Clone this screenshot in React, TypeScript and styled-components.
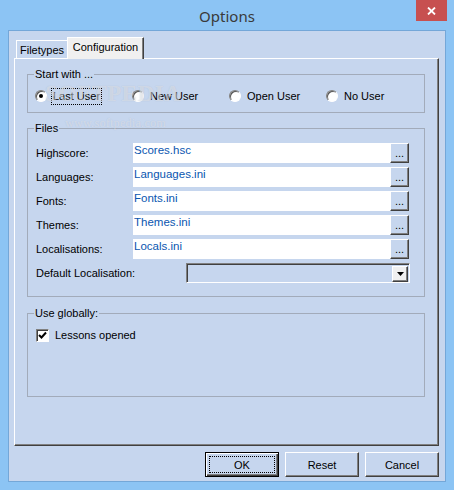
import styled, { createGlobalStyle, css } from 'styled-components'

const GlobalStyle = createGlobalStyle`
  html, body {
    margin: 0;
    padding: 0;
    background: #8cc4f4;
  }
  * {
    box-sizing: border-box;
  }
`

const FONT = `"Liberation Sans", Arial, sans-serif`
const FACE = '#c6d6ee'

const Window = styled.div`
  position: relative;
  width: 454px;
  height: 490px;
  background: #8cc4f4;
  display: flex;
  flex-direction: column;
  font-family: ${FONT};
  font-size: 11px;
  color: #000;
`

const TitleBar = styled.div`
  height: 30px;
  flex-shrink: 0;
  display: grid;
  grid-template-columns: 1fr auto 1fr;
  align-items: center;
`

const Title = styled.div`
  grid-column: 2;
  font-family: "Noto Sans", "Open Sans", sans-serif;
  font-size: 15px;
  color: #3a3a3a;
  padding-top: 1px;
`

const CloseButton = styled.div`
  grid-column: 3;
  justify-self: end;
  align-self: start;
  width: 31px;
  height: 21px;
  margin-right: 7px;
  background: #c75050;
  display: flex;
  align-items: center;
  justify-content: center;
`

const Client = styled.div`
  flex: 1;
  margin: 0 8px 8px;
  background: ${FACE};
  border: 1px solid #74a7d8;
  padding: 6px 6px 4px 5px;
  display: flex;
  flex-direction: column;
`

const TabStrip = styled.div`
  height: 21px;
  flex-shrink: 0;
  display: flex;
  align-items: flex-end;
  padding-left: 2px;
`

const Tab = styled.div<{ $active?: boolean }>`
  width: 51px;
  height: 18px;
  display: flex;
  align-items: center;
  justify-content: center;
  padding-top: 1px;
  background: ${FACE};
  border-top: 1px solid #fff;
  border-left: 1px solid #fff;
  ${p =>
    p.$active &&
    css`
      position: relative;
      z-index: 1;
      width: 77px;
      height: 22px;
      margin-bottom: -1px;
      padding: 0 0 3px;
      background: #f0f0f0;
      border-right: 1px solid #404040;
      box-shadow: inset -1px 0 #808080;
    `}
`

const TabPanel = styled.div`
  flex: 1;
  background: ${FACE};
  border: 1px solid;
  border-color: #fff #404040 #404040 #fff;
  box-shadow: inset -1px -1px #808080;
  padding: 8px 13px 0 12px;
`

const Group = styled.fieldset<{ $gap?: number }>`
  margin: ${p => p.$gap ?? 0}px 0 0;
  padding: 0;
  border: 1px solid #a2abba;
  min-width: 0;
`

const Legend = styled.legend`
  margin-left: 6px;
  padding: 0 1px;
  line-height: 14px;
`

const RadioRow = styled.div`
  display: flex;
  height: 16px;
  align-items: center;
  margin: 7px 0 8px 7px;
`

const RadioItem = styled.label`
  width: 97px;
  display: flex;
  align-items: center;
`

const RadioCircle = styled.span<{ $checked?: boolean }>`
  width: 12px;
  height: 12px;
  border-radius: 50%;
  background: #fff;
  border: 1px solid;
  border-color: #808080 #fff #fff #808080;
  box-shadow: inset 1px 1px #555;
  display: flex;
  align-items: center;
  justify-content: center;
  flex-shrink: 0;
  &::after {
    content: '';
    width: 4px;
    height: 4px;
    border-radius: 50%;
    background: ${p => (p.$checked ? '#000' : 'transparent')};
  }
`

const RadioText = styled.span<{ $focused?: boolean }>`
  margin-left: 4px;
  padding: 1px 1px;
  line-height: 13px;
  border: 1px dotted ${p => (p.$focused ? '#000' : 'transparent')};
`

const FileGrid = styled.div`
  display: grid;
  grid-template-columns: 97px 257px 19px;
  grid-auto-rows: 20px;
  row-gap: 4px;
  align-items: center;
  margin: 8px 0 0 8px;
`

const FieldLabel = styled.span`
  line-height: 13px;
  padding-top: 1px;
`

const TextField = styled.div`
  height: 20px;
  background: #fff;
  color: #0a56b0;
  padding: 1px 0 0 1px;
  line-height: 13px;
  font-size: 11.5px;
`

const RaisedButton = styled.div`
  height: 20px;
  background: ${FACE};
  border: 1px solid;
  border-color: #fff #404040 #404040 #fff;
  box-shadow: inset -1px -1px #808080;
  display: flex;
  align-items: center;
  justify-content: center;
  padding-bottom: 1px;
`

const ComboRow = styled.div`
  display: flex;
  align-items: center;
  margin: 4px 0 13px 8px;
`

const ComboLabel = styled.span`
  width: 150px;
  line-height: 13px;
`

const Combo = styled.div`
  width: 224px;
  height: 20px;
  background: ${FACE};
  border: 1px solid;
  border-color: #808080 #fff #fff #808080;
  box-shadow: inset 1px 1px #404040;
  display: flex;
  justify-content: flex-end;
  padding: 2px 1px 1px 2px;
`

const ComboArrow = styled.div`
  width: 16px;
  height: 16px;
  background: #f0f0f0;
  border: 1px solid;
  border-color: #fff #404040 #404040 #fff;
  box-shadow: inset -1px -1px #808080;
  display: flex;
  align-items: center;
  justify-content: center;
`

const CheckRow = styled.label`
  display: flex;
  align-items: center;
  margin: 9px 0 54px 8px;
`

const CheckBox = styled.span`
  width: 13px;
  height: 13px;
  background: #fff;
  border: 1px solid;
  border-color: #808080 #fff #fff #808080;
  box-shadow: inset 1px 1px #404040;
  display: flex;
  align-items: center;
  justify-content: center;
`

const CheckText = styled.span`
  margin-left: 6px;
  line-height: 13px;
`

const ButtonBar = styled.div`
  display: flex;
  justify-content: flex-end;
  gap: 6px;
  margin-top: 6px;
`

const DialogButton = styled.div<{ $default?: boolean }>`
  width: 74px;
  height: 25px;
  background: ${FACE};
  border: 1px solid;
  border-color: #fff #404040 #404040 #fff;
  box-shadow: inset -1px -1px #808080;
  display: flex;
  align-items: center;
  justify-content: center;
  ${p =>
    p.$default &&
    css`
      border-color: #000;
      box-shadow: inset 1px 1px #fff, inset -1px -1px #404040, inset -2px -2px #808080;
      padding: 3px;
    `}
`

const FocusRect = styled.span`
  flex: 1;
  align-self: stretch;
  border: 1px dotted #000;
  display: flex;
  align-items: center;
  justify-content: center;
`

const Watermark = styled.div`
  position: absolute;
  left: 45px;
  top: 81px;
  pointer-events: none;
  color: rgba(255, 255, 255, 0.4);
  font-family: "Liberation Serif", serif;
  display: flex;
  flex-direction: column;
`

const WatermarkBrand = styled.span`
  font-size: 23px;
  font-weight: bold;
  letter-spacing: 0.5px;
  text-shadow: 0 0 1px rgba(120, 130, 150, 0.3);
`

const WatermarkUrl = styled.span`
  margin: 9px 0 0 20px;
  font-size: 12px;
  letter-spacing: 0.3px;
  text-shadow: 0 0 1px rgba(120, 130, 150, 0.3);
`

const radios = [
  { label: 'Last User', checked: true },
  { label: 'New User' },
  { label: 'Open User' },
  { label: 'No User' },
]

const files = [
  ['Highscore:', 'Scores.hsc'],
  ['Languages:', 'Languages.ini'],
  ['Fonts:', 'Fonts.ini'],
  ['Themes:', 'Themes.ini'],
  ['Localisations:', 'Locals.ini'],
]

export default function App() {
  return (
    <>
      <GlobalStyle />
      <Window>
        <TitleBar>
          <Title>Options</Title>
          <CloseButton>
            <svg width="9" height="8" viewBox="0 0 9 8">
              <path d="M1 0.5 L8 7.5 M8 0.5 L1 7.5" stroke="#fff" strokeWidth="1.8" />
            </svg>
          </CloseButton>
        </TitleBar>

        <Client>
          <TabStrip>
            <Tab>Filetypes</Tab>
            <Tab $active>Configuration</Tab>
          </TabStrip>

          <TabPanel>
            <Group>
              <Legend>Start with ...</Legend>
              <RadioRow>
                {radios.map(r => (
                  <RadioItem key={r.label}>
                    <RadioCircle $checked={r.checked} />
                    <RadioText $focused={r.checked}>{r.label}</RadioText>
                  </RadioItem>
                ))}
              </RadioRow>
            </Group>

            <Group $gap={8}>
              <Legend>Files</Legend>
              <FileGrid>
                {files.map(([label, value]) => [
                  <FieldLabel key={label}>{label}</FieldLabel>,
                  <TextField key={label + 'v'}>{value}</TextField>,
                  <RaisedButton key={label + 'b'}>...</RaisedButton>,
                ])}
              </FileGrid>
              <ComboRow>
                <ComboLabel>Default Localisation:</ComboLabel>
                <Combo>
                  <ComboArrow>
                    <svg width="7" height="4" viewBox="0 0 7 4">
                      <path d="M0 0 H7 L3.5 4 Z" fill="#000" />
                    </svg>
                  </ComboArrow>
                </Combo>
              </ComboRow>
            </Group>

            <Group $gap={9}>
              <Legend>Use globally:</Legend>
              <CheckRow>
                <CheckBox>
                  <svg width="9" height="9" viewBox="0 0 9 9">
                    <path d="M1 4 L3.5 6.5 L8 1.5" stroke="#000" strokeWidth="2" fill="none" />
                  </svg>
                </CheckBox>
                <CheckText>Lessons opened</CheckText>
              </CheckRow>
            </Group>
          </TabPanel>

          <ButtonBar>
            <DialogButton $default>
              <FocusRect>OK</FocusRect>
            </DialogButton>
            <DialogButton>Reset</DialogButton>
            <DialogButton>Cancel</DialogButton>
          </ButtonBar>
        </Client>

        <Watermark>
          <WatermarkBrand>SOFTPEDIA</WatermarkBrand>
          <WatermarkUrl>www.softpedia.com</WatermarkUrl>
        </Watermark>
      </Window>
    </>
  )
}
